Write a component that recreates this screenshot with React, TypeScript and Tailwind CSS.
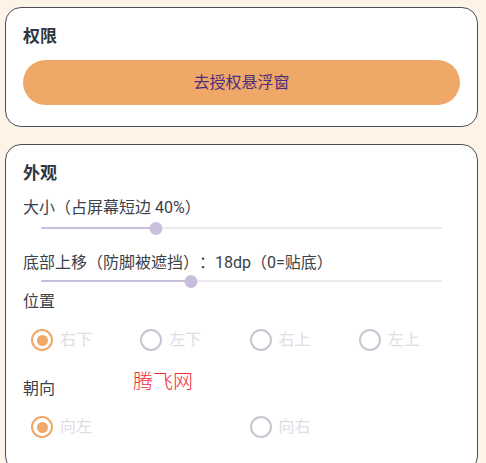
import { useState } from "react";

const FONT = { fontFamily: 'Roboto, "Noto Sans CJK SC", sans-serif' };

function Slider({ value, height }: { value: number; height: string }) {
  return (
    <div className={`relative mx-[18px] flex items-center ${height}`}>
      <div className="h-[2px] w-full rounded-full bg-[#ebe8f0]" />
      <div
        className="absolute left-0 h-[2px] rounded-full bg-[#c9bfdc]"
        style={{ width: `${value * 100}%` }}
      />
      <div
        className="absolute h-[13px] w-[13px] -translate-x-1/2 rounded-full bg-[#c9bedc]"
        style={{ left: `${value * 100}%` }}
      />
    </div>
  );
}

function Radio({ label, checked }: { label: string; checked: boolean }) {
  return (
    <div className="flex h-[40px] items-center gap-[7px] pl-[8px]">
      <div
        className={`flex h-[22px] w-[22px] items-center justify-center rounded-full border-[2.5px] ${
          checked ? "border-[#f0a868]" : "border-[#c9c4d2]"
        }`}
      >
        {checked && <div className="h-[11px] w-[11px] rounded-full bg-[#f0a868]" />}
      </div>
      <span className="text-[16px] leading-[22px] text-[#e0dce6]">{label}</span>
    </div>
  );
}

export default function App() {
  const [pos] = useState("右下");
  const [dir] = useState("向左");

  return (
    <div
      className="relative min-h-[463px] bg-[#fdf4e7] pt-[7px] [text-spacing-trim:space-all]"
      style={FONT}
    >
      {/* 权限 */}
      <div className="ml-[5px] w-[473px] rounded-[16px] border border-[#4d4d57] bg-white px-[17px] pt-[16px] pb-[21px]">
        <h2 className="text-[17px] font-bold leading-[24px] text-[#2f3640]">权限</h2>
        <button className="mt-[12px] flex h-[45px] w-full items-center justify-center rounded-full bg-[#f0a868] text-[16px] text-[#4b2c7e]">
          去授权悬浮窗
        </button>
      </div>

      {/* 外观 */}
      <div className="mt-[17px] ml-[5px] w-[473px] rounded-[16px] border border-[#4d4d57] bg-white px-[17px] pt-[16px] pb-[24px]">
        <h2 className="text-[17px] font-bold leading-[24px] text-[#2f3640]">外观</h2>

        <p className="mt-[12px] text-[16px] leading-[22px] text-[#3c4049]">大小（占屏幕短边 40%）</p>
        <Slider value={0.286} height="h-[18px]" />

        <p className="mt-[15px] text-[16px] leading-[22px] text-[#3c4049]">
          底部上移（防脚被遮挡）：18dp（0=贴底）
        </p>
        <Slider value={0.375} height="h-[14px]" />

        <p className="mt-[3px] text-[16px] leading-[22px] text-[#3c4049]">位置</p>
        <div className="mt-[7px] grid grid-cols-4">
          {["右下", "左下", "右上", "左上"].map((p) => (
            <Radio key={p} label={p} checked={pos === p} />
          ))}
        </div>

        <p className="mt-[18px] text-[16px] leading-[22px] text-[#3c4049]">朝向</p>
        <div className="mt-[7px] grid grid-cols-2">
          {["向左", "向右"].map((d) => (
            <Radio key={d} label={d} checked={dir === d} />
          ))}
        </div>
      </div>

      {/* watermark */}
      <span className="pointer-events-none absolute top-[370px] left-[133px] text-[20px] font-light leading-[24px] text-[#f5283a]">
        腾飞网
      </span>
    </div>
  );
}
